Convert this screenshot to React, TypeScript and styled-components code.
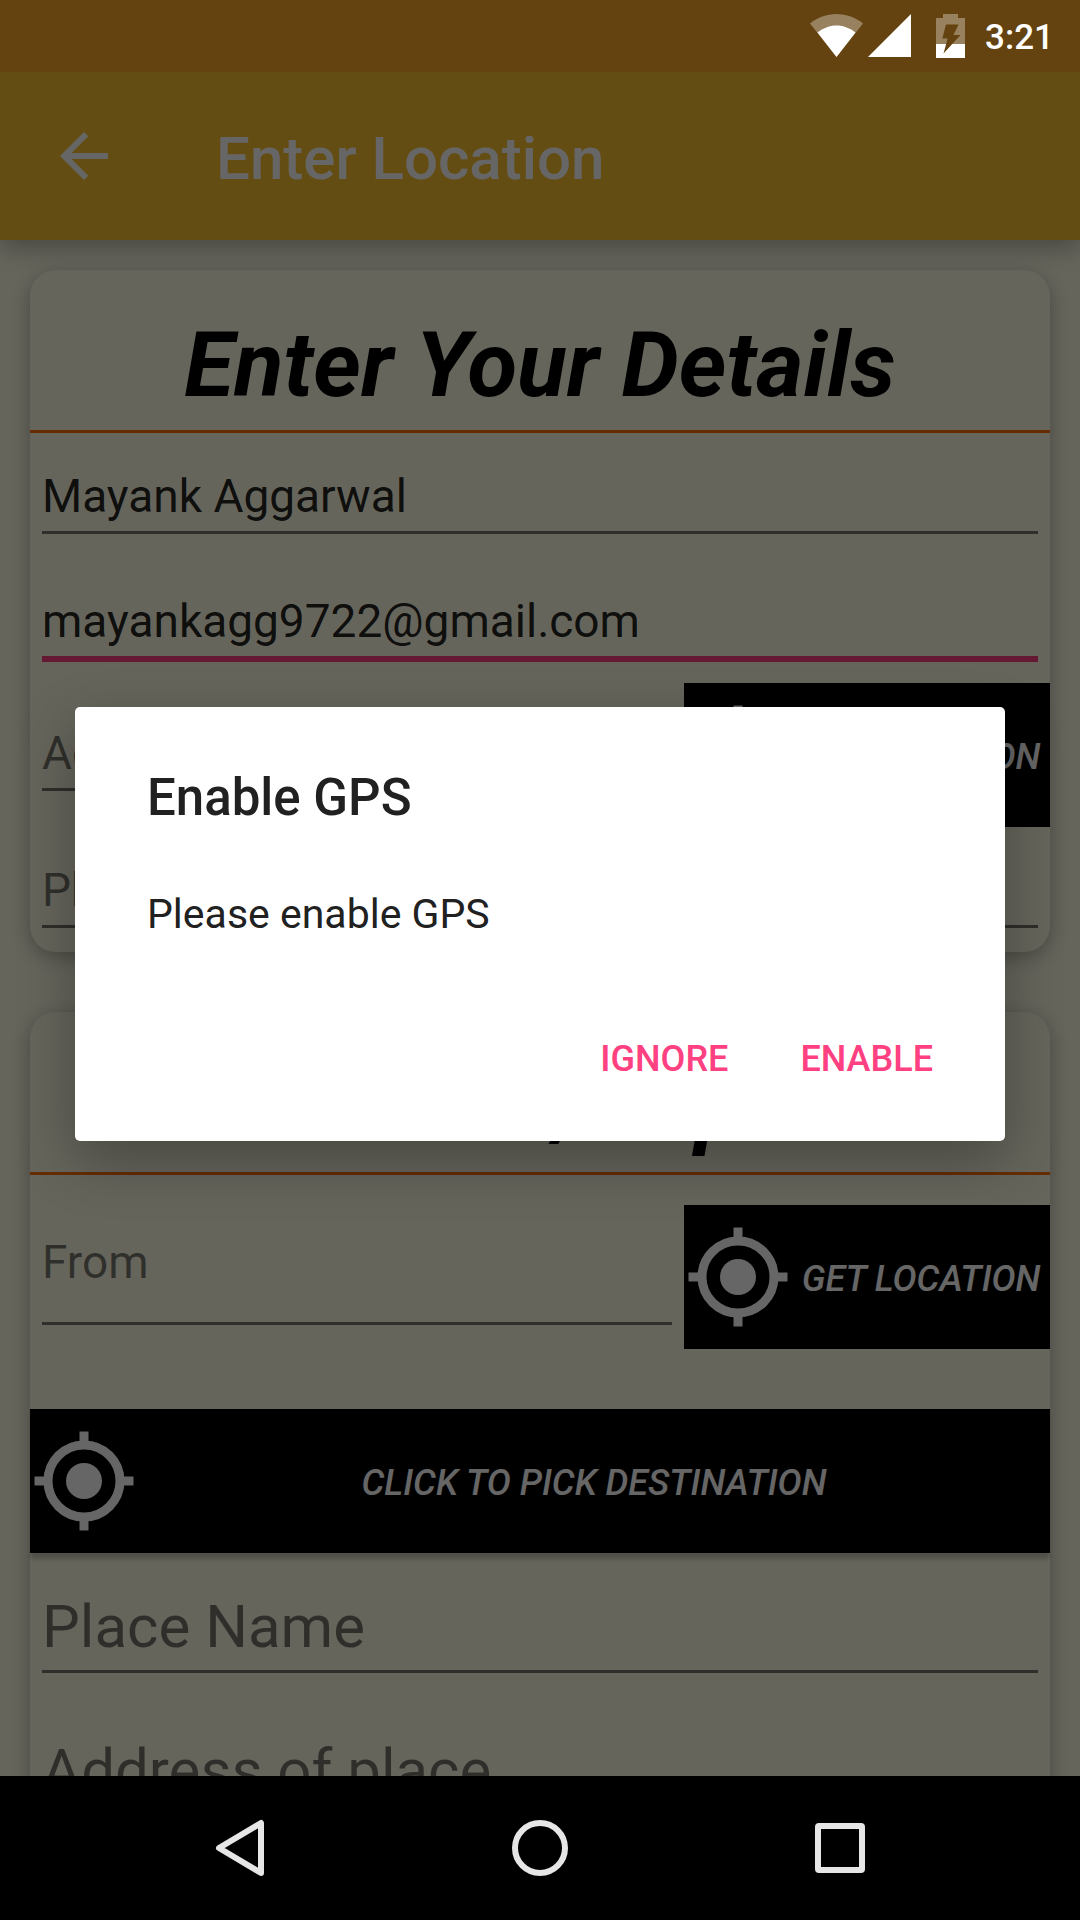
import React from "react";
import styled, { createGlobalStyle, css } from "styled-components";

const color = {
  primary: "#fbc02d",
  statusBar: "#644310",
  surface: "#fffde7",
  divider: "#ff6f00",
  accent: "#ff4081",
  text: "rgba(0, 0, 0, 0.87)",
  hint: "rgba(0, 0, 0, 0.54)",
};

const GlobalStyle = createGlobalStyle`
  *, *::before, *::after { box-sizing: border-box; }
  body {
    margin: 0;
    background: #000;
    font-family: Roboto, "Noto Sans", sans-serif;
  }
  button, input { font: inherit; }
`;

const Screen = styled.div`
  display: flex;
  flex-direction: column;
  height: 100vh;
  overflow: hidden;
`;

const StatusBar = styled.header`
  flex: none;
  display: flex;
  justify-content: flex-end;
  align-items: flex-start;
  height: 72px;
  padding: 14px 26px 0 0;
  background: ${color.statusBar};
  color: #fff;

  svg { display: block; }
`;

const Signals = styled.div`
  display: flex;
  gap: 5px;
  margin-right: 25px;
`;

const Clock = styled.time`
  margin-left: 20px;
  font-size: 35px;
  line-height: 48px;
  font-weight: 500;
`;

const AppWindow = styled.div`
  position: relative;
  flex: 1;
  min-height: 0;
  display: flex;
  flex-direction: column;
  overflow: hidden;
  background: ${color.surface};
`;

const Toolbar = styled.div`
  position: relative;
  z-index: 1;
  flex: none;
  display: flex;
  align-items: center;
  height: 168px;
  padding: 0 48px;
  background: ${color.primary};
  color: #fff;
  box-shadow: 0 8px 24px rgba(0, 0, 0, 0.3);
`;

const UpButton = styled.button`
  display: flex;
  padding: 0;
  border: 0;
  background: none;
  color: inherit;
`;

const ToolbarTitle = styled.h1`
  margin: 0 0 0 96px;
  padding-top: 6px;
  font-size: 60px;
  line-height: 70px;
  font-weight: 500;
`;

const Content = styled.main`
  flex: 1;
  min-height: 0;
  overflow-y: auto;
  scrollbar-width: none;
  display: flex;
  flex-direction: column;
  gap: 60px;
  padding: 30px;
`;

const Card = styled.section`
  flex: none;
  border-radius: 26px;
  background: ${color.surface};
  box-shadow: 0 5px 20px rgba(0, 0, 0, 0.3);
`;

const CardHeading = styled.h2`
  margin: 0;
  padding: 42px 0 12px;
  border-bottom: 3px solid ${color.divider};
  font-size: 91px;
  line-height: 106px;
  font-weight: 700;
  font-style: italic;
  text-align: center;
  color: #000;
`;

const Row = styled.div<{ $spaced?: boolean }>`
  display: flex;
  align-items: flex-start;
  margin: ${(p) => (p.$spaced ? "30px 0 60px" : "0")};
`;

type FieldKind = "regular" | "large" | "tall" | "inline";

const fieldTop = { regular: 36, large: 37, tall: 30, inline: 43 };
const inputHeight = { regular: 65, large: 83, tall: 90, inline: 65 };
const inputBottom = { regular: 8, large: 7, tall: 33, inline: 8 };

const FieldBox = styled.div<{ $kind: FieldKind }>`
  flex: 1;
  min-width: 0;
  padding: ${(p) => fieldTop[p.$kind]}px 12px 24px;
`;

const FieldInput = styled.input<{ $kind: FieldKind; $active?: boolean }>`
  display: block;
  width: 100%;
  height: ${(p) => inputHeight[p.$kind]}px;
  padding: 0 0 ${(p) => inputBottom[p.$kind]}px;
  border: 0;
  border-bottom: 3px solid ${color.hint};
  border-radius: 0;
  outline: 0;
  background: none;
  color: ${color.text};
  font-size: ${(p) => (p.$kind === "large" ? 60 : 46)}px;
  line-height: ${(p) => (p.$kind === "large" ? 73 : 54)}px;

  &::placeholder {
    color: ${color.hint};
    opacity: 1;
  }

  ${(p) =>
    p.$active &&
    css`
      height: 68px;
      margin-bottom: -3px;
      border-bottom: 6px solid ${color.accent};
    `}
`;

const LocateButton = styled.button<{ $wide?: boolean }>`
  flex: none;
  display: flex;
  align-items: center;
  width: ${(p) => (p.$wide ? "100%" : "366px")};
  height: 144px;
  padding: 0;
  border: 0;
  background: #000;
  color: #fff;
  font-size: 36px;
  line-height: 44px;
  font-weight: 500;
  font-style: italic;
  text-transform: uppercase;
  white-space: nowrap;
  box-shadow: ${(p) => (p.$wide ? "0 7px 4px -1px rgba(0, 0, 0, 0.22)" : "none")};

  svg { flex: none; }
  span { flex: 1; padding-top: 4px; text-align: center; }
`;

const Scrim = styled.div`
  position: absolute;
  inset: 0;
  z-index: 2;
  display: flex;
  align-items: center;
  padding: 0 75px;
  background: rgba(0, 0, 0, 0.6);
`;

const Dialog = styled.div`
  flex: 1;
  padding: 60px 72px 19px;
  border-radius: 5px;
  background: #fff;
  color: #212121;
  box-shadow: 0 20px 56px rgba(0, 0, 0, 0.3);
`;

const DialogTitle = styled.h2`
  margin: 0 0 60px;
  font-size: 51px;
  line-height: 62px;
  font-weight: 500;
`;

const DialogMessage = styled.p`
  margin: 0 0 57px;
  font-size: 41px;
  line-height: 50px;
`;

const DialogActions = styled.div`
  display: flex;
  justify-content: flex-end;
  gap: 20px;
  margin-right: -26px;
`;

const DialogButton = styled.button`
  height: 126px;
  padding: 0 26px;
  border: 0;
  background: none;
  color: ${color.accent};
  font-size: 36px;
  line-height: 44px;
  font-weight: 500;
  text-transform: uppercase;
`;

const NavBar = styled.nav`
  flex: none;
  display: grid;
  grid-template-columns: repeat(3, 1fr);
  height: 144px;
  padding: 0 90px;
  background: #000;
`;

const NavButton = styled.button`
  display: flex;
  align-items: center;
  justify-content: center;
  padding: 0;
  border: 0;
  background: none;
  color: #e6e6e6;
`;

const WifiIcon = () => (
  <svg width="53" height="43" viewBox="0 0 53 43" aria-hidden="true">
    <path d="M0 9.5C7.5 3.4 16.6 0 26.5 0S45.5 3.4 53 9.5L26.5 43Z" fill="#fff" fillOpacity="0.33" />
    <path d="M7.5 18.5C13 14.2 19.5 11.5 26.5 11.5S40 14.2 45.5 18.5L26.5 43Z" fill="#fff" />
  </svg>
);

const CellIcon = () => (
  <svg width="43" height="43" viewBox="0 0 43 43" aria-hidden="true">
    <path d="M0 43L43 0V43Z" fill="#fff" />
  </svg>
);

const BatteryIcon = () => (
  <svg width="29" height="44" viewBox="0 0 29 44" aria-hidden="true">
    <path d="M7 0H22V4H29V30H0V4H7Z" fill="#fff" fillOpacity="0.33" />
    <path d="M0 30H29V44H0Z" fill="#fff" />
    <path d="M10 10.5H22.5L17.5 21H24.5L7.5 39.5L11.7 24.5H6.3Z" fill={color.statusBar} />
  </svg>
);

const ArrowIcon = () => (
  <svg width="72" height="72" viewBox="0 0 24 24" fill="currentColor" aria-hidden="true">
    <path d="M20 11H7.83l5.59-5.59L12 4l-8 8 8 8 1.41-1.41L7.83 13H20v-2z" />
  </svg>
);

const TargetIcon = () => (
  <svg width="108" height="108" viewBox="0 0 24 24" fill="none" stroke="currentColor" strokeWidth="2" aria-hidden="true">
    <circle cx="12" cy="12" r="4" fill="currentColor" stroke="none" />
    <circle cx="12" cy="12" r="8" />
    <path d="M12 1v3M12 20v3M1 12h3M20 12h3" />
  </svg>
);

const navIcons = {
  Back: <path d="M53 7V57L11 32Z" />,
  Home: <circle cx="32" cy="32" r="25" />,
  Overview: <rect x="10" y="10" width="44" height="44" rx="1" />,
};

type FieldProps = {
  label: string;
  value?: string;
  type?: string;
  kind?: FieldKind;
  active?: boolean;
};

function Field({ label, value, type = "text", kind = "regular", active }: FieldProps) {
  return (
    <FieldBox $kind={kind}>
      <FieldInput
        type={type}
        aria-label={label}
        placeholder={label}
        defaultValue={value}
        $kind={kind}
        $active={active}
      />
    </FieldBox>
  );
}

export default function App() {
  return (
    <Screen>
      <GlobalStyle />
      <StatusBar>
        <Signals>
          <WifiIcon />
          <CellIcon />
        </Signals>
        <BatteryIcon />
        <Clock>3:21</Clock>
      </StatusBar>

      <AppWindow>
        <Toolbar>
          <UpButton aria-label="Navigate up">
            <ArrowIcon />
          </UpButton>
          <ToolbarTitle>Enter Location</ToolbarTitle>
        </Toolbar>

        <Content>
          <Card>
            <CardHeading>Enter Your Details</CardHeading>
            <Field label="Name" value="Mayank Aggarwal" />
            <Field label="Email" value="mayankagg9722@gmail.com" active />
            <Row>
              <Field label="Address" kind="inline" />
              <LocateButton>
                <TargetIcon />
                <span>Get Location</span>
              </LocateButton>
            </Row>
            <Field label="Phone" type="tel" />
          </Card>

          <Card>
            <CardHeading>Event/Trip</CardHeading>
            <Row $spaced>
              <Field label="From" kind="tall" />
              <LocateButton>
                <TargetIcon />
                <span>Get Location</span>
              </LocateButton>
            </Row>
            <LocateButton $wide>
              <TargetIcon />
              <span>Click to pick destination</span>
            </LocateButton>
            <Field label="Place Name" kind="large" />
            <Field label="Address of place" kind="large" />
          </Card>
        </Content>

        <Scrim>
          <Dialog role="alertdialog" aria-labelledby="gps-title" aria-describedby="gps-message">
            <DialogTitle id="gps-title">Enable GPS</DialogTitle>
            <DialogMessage id="gps-message">Please enable GPS</DialogMessage>
            <DialogActions>
              <DialogButton>Ignore</DialogButton>
              <DialogButton>Enable</DialogButton>
            </DialogActions>
          </Dialog>
        </Scrim>
      </AppWindow>

      <NavBar>
        {Object.entries(navIcons).map(([name, shape]) => (
          <NavButton key={name} aria-label={name}>
            <svg width="64" height="64" viewBox="0 0 64 64" fill="none" stroke="currentColor" strokeWidth="6" strokeLinejoin="round">
              {shape}
            </svg>
          </NavButton>
        ))}
      </NavBar>
    </Screen>
  );
}
